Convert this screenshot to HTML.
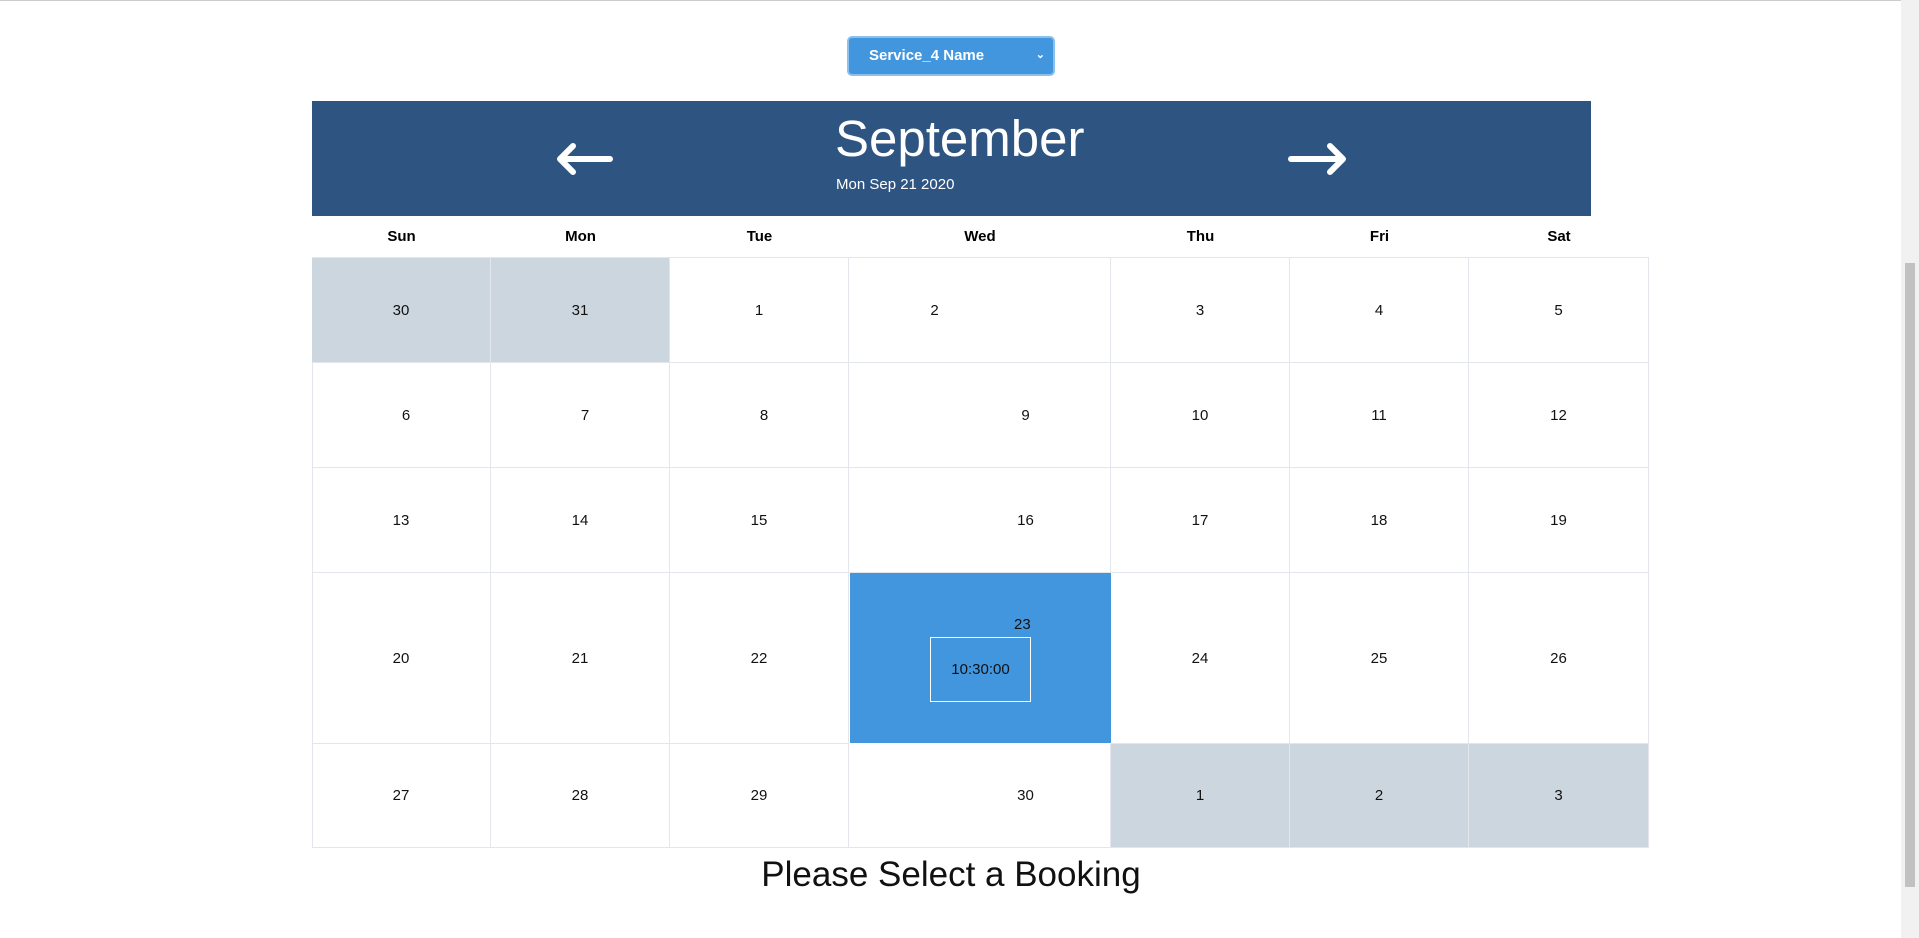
<!DOCTYPE html>
<html><head><meta charset="utf-8"><style>
body{margin:0;width:1919px;height:938px;overflow:hidden;background:#fff;font-family:"Liberation Sans",sans-serif;position:relative}
.a{position:absolute}
.sel{left:847px;top:36px;width:208px;height:40px;background:#4296de;border:2px solid #8cc0ec;border-radius:5px;box-sizing:border-box;color:#fff;font-weight:bold;font-size:15px;line-height:36px}
.hdr{left:312px;top:101px;width:1279px;height:115px;background:#2e5482;color:#fff}
.dh{top:217px;height:40px;line-height:40px;font-weight:bold;font-size:15px;text-align:center}
.c{border-right:1px solid #e3e6ea;border-bottom:1px solid #e3e6ea;box-sizing:border-box;font-size:15px;display:flex;align-items:center;justify-content:center;color:#111}
.g{background:#ccd6df}
</style></head><body>
<div class="a" style="left:0;top:0;width:1919px;height:1px;background:#ccc"></div>
<div class="a sel"><span style="position:absolute;left:20px">Service_4 Name</span><span style="position:absolute;right:8px;top:-1px;font-size:11px">&#8964;</span></div>
<div class="a hdr">
<div class="a" style="left:523px;top:6px;font-size:51px;line-height:64px">September</div>
<div class="a" style="left:524px;top:75px;font-size:15px">Mon Sep 21 2020</div>
<svg class="a" style="left:0;top:0" width="1279" height="115"><g stroke="#fff" stroke-width="6" stroke-linecap="round" stroke-linejoin="round" fill="none"><path d="M249 58H298M261 45L248 58L261 71"/><path d="M979 58H1030M1018 45L1031 58L1018 71"/></g></svg>
</div>
<div class="a" style="left:312px;top:257px;width:1337px;height:1px;background:#e3e6ea"></div>
<div class="a" style="left:312px;top:257px;width:1px;height:590px;background:#e3e6ea"></div>
<div id="cal"></div>
<div class="a" style="left:0;top:855px;width:1902px;text-align:center;font-size:35px;color:#111">Please Select a Booking</div>
<div class="a" style="left:1901px;top:0;width:18px;height:938px;background:#f1f1f1"></div>
<div class="a" style="left:1905px;top:263px;width:10px;height:624px;background:#c1c1c1"></div>
<script>
var cols=[312,491,670,849,1111,1290,1469,1649],rows=[257,362,467,572,743,847];
var names=["Sun","Mon","Tue","Wed","Thu","Fri","Sat"];
var d=[[30,31,1,2,3,4,5],[6,7,8,9,10,11,12],[13,14,15,16,17,18,19],[20,21,22,23,24,25,26],[27,28,29,30,1,2,3]];
var h="";
for(var i=0;i<7;i++)h+='<div class="a dh" style="left:'+cols[i]+'px;width:'+(cols[i+1]-cols[i])+'px">'+names[i]+'</div>';
for(var r=0;r<5;r++)for(var i=0;i<7;i++){
var g=(r==0&&i<2)||(r==4&&i>3);var x=cols[i],w=cols[i+1]-x,y=rows[r]+1,hh=rows[r+1]-rows[r];
var off=0;if(i==3){off=(r==0)?-45:46}
if(r==1&&i<3)off=5;
if(r==3&&i==3){h+='<div class="a" style="left:850px;top:573px;width:261px;height:170px;background:#4296de"><span class="a" style="left:164px;top:43px;font-size:15px;color:#111">23</span><div class="a" style="left:80px;top:64px;width:101px;height:65px;border:1px solid #fff;box-sizing:border-box;font-size:15px;line-height:63px;text-align:center;color:#111">10:30:00</div></div>';continue;}
h+='<div class="a c'+(g?' g':'')+'" style="left:'+x+'px;top:'+y+'px;width:'+w+'px;height:'+hh+'px"><span style="position:relative;left:'+off+'px">'+d[r][i]+'</span></div>';}
document.getElementById('cal').innerHTML=h;
</script>
</body></html>
